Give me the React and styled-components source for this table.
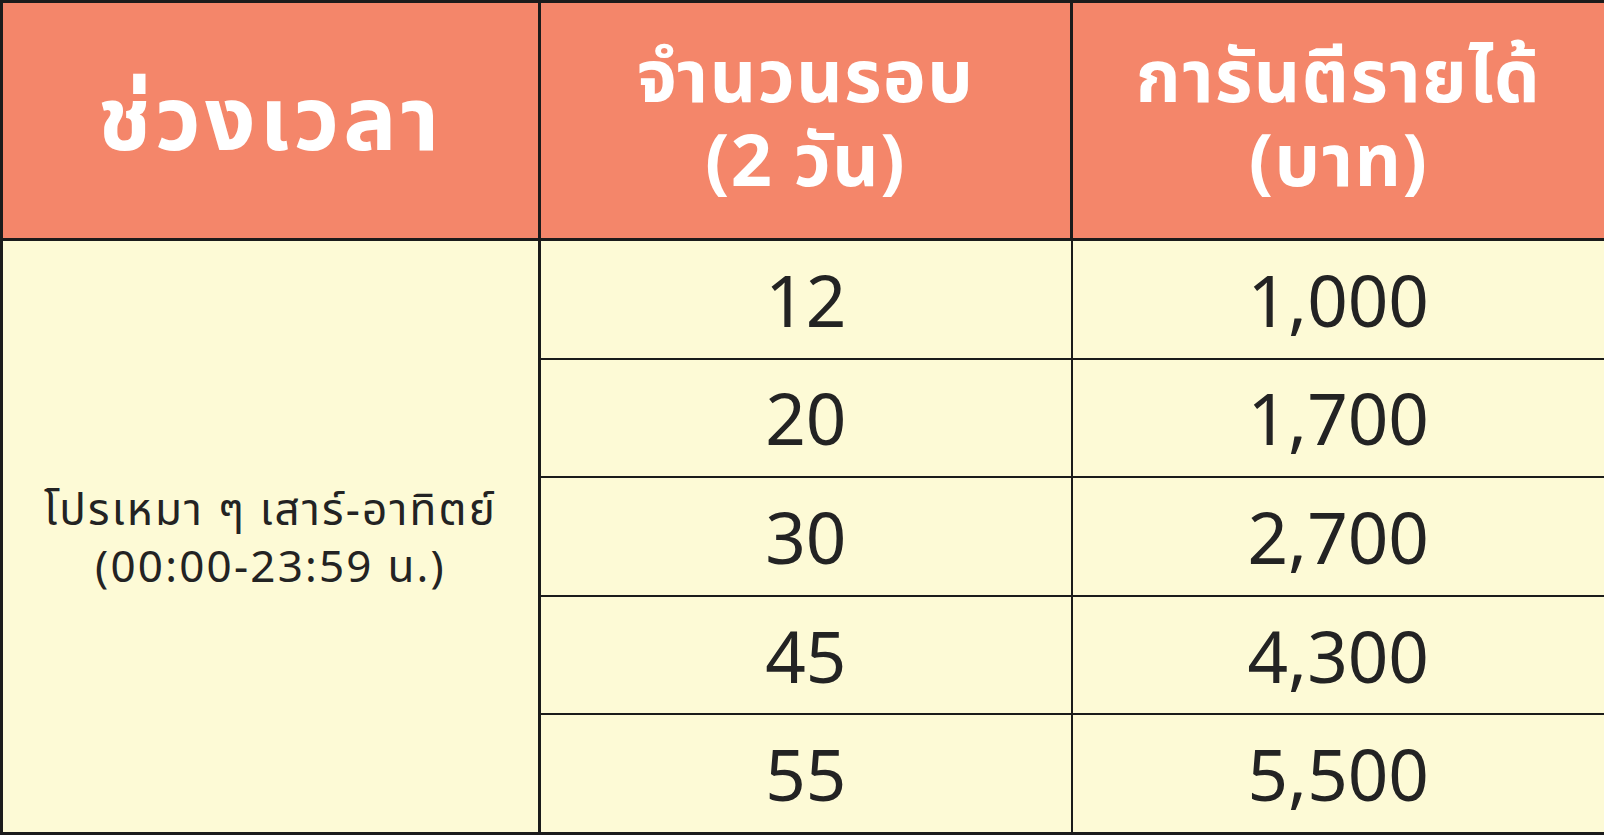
import React from 'react';
import styled, { createGlobalStyle } from 'styled-components';

const GlobalStyle = createGlobalStyle`
  html, body {
    margin: 0;
    padding: 0;
    background: #fdfad6;
  }
`;

const Table = styled.table`
  width: 1604px;
  height: 835px;
  border-collapse: collapse;
  table-layout: fixed;
  font-family: 'Noto Sans', 'Noto Sans Thai', 'Liberation Sans', sans-serif;
  border: 3px solid #1b1b1b;
`;

const HeadCell = styled.th`
  background: #f4866a;
  color: #ffffff;
  font-weight: 700;
  font-size: ${({ big }) => (big ? '89px' : '72px')};
  letter-spacing: ${({ big }) => (big ? '4px' : '1.5px')};
  line-height: ${({ big }) => (big ? '1.2' : '84px')};
  height: 226px;
  padding: 0 0 9px;
  text-align: center;
  vertical-align: middle;
  border: 3px solid #1b1b1b;
`;

const Cell = styled.td`
  background: #fdfad6;
  color: #232323;
  font-size: 71px;
  font-weight: 400;
  text-align: center;
  vertical-align: middle;
  padding: 0;
  height: 115px;
  border: 2px solid #1b1b1b;
`;

const PeriodCell = styled(Cell)`
  font-size: 44px;
  letter-spacing: 2.2px;
  line-height: 57px;
  padding: 0;
  border-width: 3px;
`;

const rows = [
  ['12', '1,000'],
  ['20', '1,700'],
  ['30', '2,700'],
  ['45', '4,300'],
  ['55', '5,500'],
];

export default function App() {
  return (
    <>
      <GlobalStyle />
      <Table>
        <colgroup>
          <col style={{ width: '538px' }} />
          <col style={{ width: '532px' }} />
          <col style={{ width: '534px' }} />
        </colgroup>
        <thead>
          <tr>
            <HeadCell big>ช่วงเวลา</HeadCell>
            <HeadCell>
              จำนวนรอบ
              <br />
              (2 วัน)
            </HeadCell>
            <HeadCell>
              การันตีรายได้
              <br />
              (บาท)
            </HeadCell>
          </tr>
        </thead>
        <tbody>
          {rows.map(([rounds, income], i) => (
            <tr key={rounds}>
              {i === 0 && (
                <PeriodCell rowSpan={rows.length}>
                  โปรเหมา ๆ เสาร์-อาทิตย์
                  <br />
                  (00:00-23:59 น.)
                </PeriodCell>
              )}
              <Cell>{rounds}</Cell>
              <Cell>{income}</Cell>
            </tr>
          ))}
        </tbody>
      </Table>
    </>
  );
}
